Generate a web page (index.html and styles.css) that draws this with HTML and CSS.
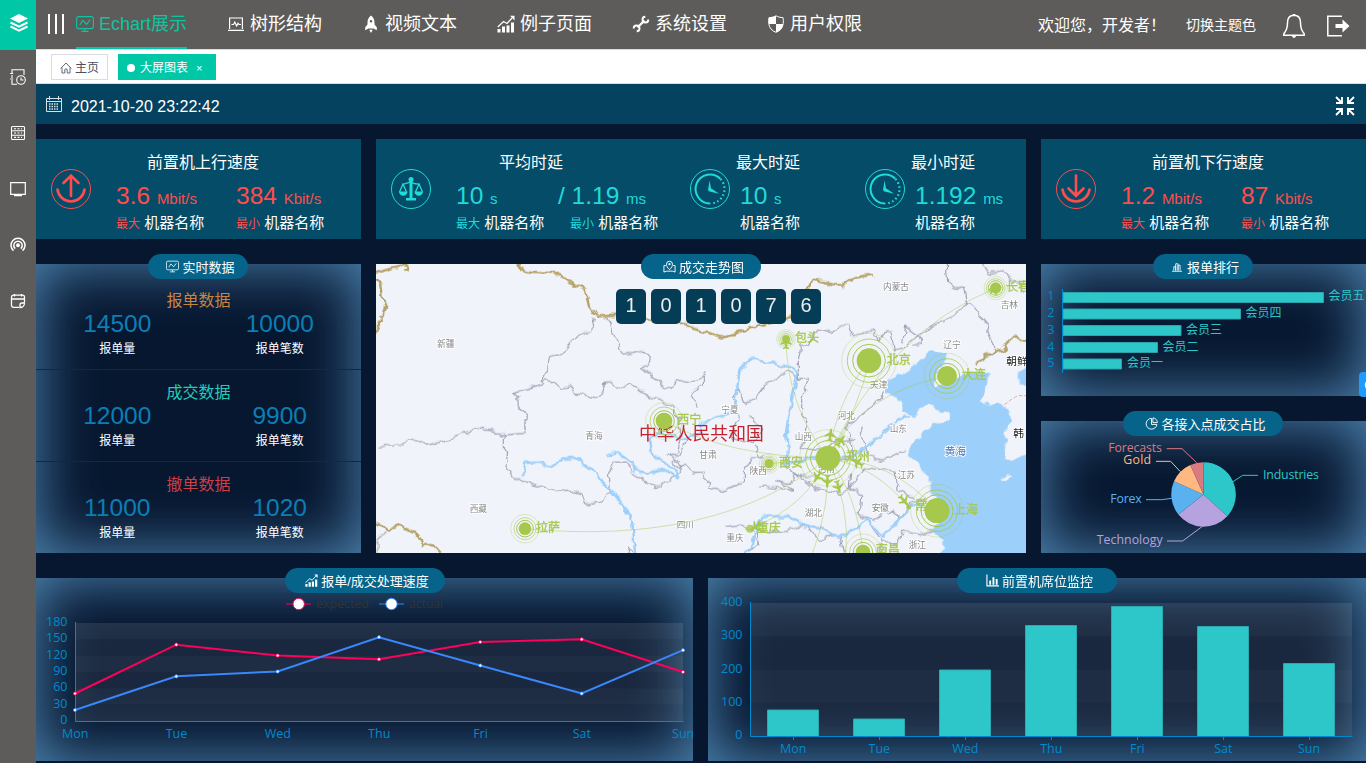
FILE: index.html
```html
<!DOCTYPE html>
<html lang="zh-CN">
<head>
<meta charset="utf-8">
<title>大屏图表</title>
<link rel="stylesheet" href="styles.css">
</head>
<body>
<svg class="defs" width="0" height="0">
  <symbol id="i-monitor" viewBox="0 0 18 18"><g fill="none" stroke="currentColor" stroke-width="1.1"><rect x=".6" y="1.6" width="16.8" height="12" rx="2"/><path d="M3.8 10l3-4.6 3.8 4 3.6-4.8M9 13.6V16M5.5 16.4h7"/></g></symbol>
  <symbol id="i-laptop" viewBox="0 0 18 18"><g fill="none" stroke="currentColor" stroke-width="1.2"><path d="M2.6 14V3h12.800v11M1 15.400h16M4.500 9.500h2l1.300-2.400L9.600 11l1.400-2.600 1 1.100h2"/></g></symbol>
  <symbol id="i-rocket" viewBox="0 0 18 18"><path fill="currentColor" fill-rule="evenodd" d="M9 .500c2.500 2 3.500 4.200 3.500 7v2l2.300 2.800v3L11.500 13.500h-5L3.200 15.300v-3l2.300-2.800v-2C5.500 4.700 6.500 2.500 9 .500zM9 5a1.300 1.300 0 1 0 0 2.600A1.300 1.300 0 0 0 9 5zM7.200 14.700h3.600L9 18z"/></symbol>
  <symbol id="i-growth" viewBox="0 0 18 18"><path fill="currentColor" d="M.5 14h3v3.500h-3zM5 11.500h3v6H5zM9.500 10.500h3v7h-3zM14 7.500h3v10h-3z"/><path fill="none" stroke="currentColor" stroke-width="1.300" d="M.8 12l5.700-5.500 3.500 2 5-5.500"/><path fill="currentColor" d="M13 .800H17.500V5.500z"/></symbol>
  <symbol id="i-wrench" viewBox="0 0 18 18"><path fill="none" stroke="currentColor" stroke-width="2.300" d="M5.500 12.500l7-7"/><path fill="none" stroke="currentColor" stroke-width="1.900" d="M16.300 4.500a2.900 2.900 0 1 1-3-2.800M1.700 13.500a2.900 2.900 0 1 1 3 2.800"/></symbol>
  <symbol id="i-shield" viewBox="0 0 18 18"><path fill="none" stroke="currentColor" stroke-width="1" d="M9 .8c2 1.300 4.500 1.700 7 1.800.500 2 .400 4 .200 6-.500 4.200-3 7.300-7.200 8.700-4.200-1.400-6.700-4.500-7.200-8.700-.200-2-.300-4 .200-6C4.500 2.500 7 2.100 9 .800z"/><path fill="currentColor" d="M9 .8V9H1.800c-.2-2-.2-4.300.2-6.400C4.500 2.500 7 2.100 9 .8zM9 9h7.200c-.5 4.200-3 7-7.200 8.300z"/></symbol>
  <symbol id="i-clock" viewBox="0 0 40 40"><g fill="none" stroke="currentColor"><circle cx="20" cy="20" r="19.500"/><path stroke-width="2" d="M20 34.500a14.500 14.500 0 1 1 10.300-24.800"/><path stroke-width="2.200" stroke-dasharray="1.600 2.500" d="M30.500 10a14.500 14.500 0 0 1-10 24.500"/></g><path fill="currentColor" d="M19.600 11.500l1.400 7.800 8.200 5.500-9.700-2.400a2 2 0 0 1-1.300-2.600z"/></symbol>
  <symbol id="plane" viewBox="-20 -22 40 44"><path fill="#a6c84c" d="M0-20l3 3 1 10L17 3v4L4 2 3 12l6 5v3l-9-3-9 3v-3l6-5L-4 2l-13 5V3L-4-7l1-10z"/></symbol>
</svg>

<aside class="side">
  <div class="logo"><svg width="20" height="20" viewBox="0 0 20 20"><path fill="#fff" d="M10 1l9 4.500-9 4.500-9-4.500z"/><path fill="none" stroke="#fff" stroke-width="2" d="M1.500 9.500L10 13.700l8.500-4.200M1.500 13.500L10 17.700l8.500-4.200"/></svg></div>
  <div class="side-item"><svg width="16" height="16" viewBox="0 0 16 16"><g fill="none" stroke="currentColor" stroke-width="1.100"><path d="M14 6V.7H2V4M2 6v3M2 11v4.300h5M.2 4.500h3M.2 10h3"/><circle cx="11" cy="11" r="4.300"/><path d="M11 8.500V11h2.500"/></g></svg></div>
  <div class="side-item"><svg width="16" height="16" viewBox="0 0 16 16"><g fill="none" stroke="currentColor" stroke-width="1.100"><rect x="1.500" y="1.500" width="13" height="13" rx="1"/><path d="M1.500 5.800h13M1.500 10.200h13"/><path stroke-dasharray="2 1.500" d="M4 3.700h8M4 8h8M4 12.400h8"/></g></svg></div>
  <div class="side-item"><svg width="16" height="16" viewBox="0 0 16 16"><path fill="none" stroke="currentColor" stroke-width="1.200" d="M.7 1.600h14.600v11.800H.7zM4 14.700h8"/></svg></div>
  <div class="side-item"><svg width="16" height="16" viewBox="0 0 16 16"><g fill="none" stroke="currentColor" stroke-width="1.500"><path d="M3.500 13.600a7 7 0 1 1 9 0M5.200 11.600a4.200 4.200 0 1 1 5.600 0"/><circle cx="8" cy="8.300" r="1.200" fill="currentColor"/></g></svg></div>
  <div class="side-item"><svg width="16" height="16" viewBox="0 0 16 16"><path fill="none" stroke="currentColor" stroke-width="1.300" d="M9 14.300H3.500a2 2 0 0 1-2-2V4.200a2 2 0 0 1 2-2h9a2 2 0 0 1 2 2V9M1.500 6h13M4.500 1v2.500M11.500 1v2.500M10 14.500V12a2 2 0 0 1 2-2h2.500c0 2.500-2 4.500-4.500 4.500z"/></svg></div>
</aside>

<main class="main">
  <header class="header">
    <svg class="burger" width="16" height="20" viewBox="0 0 16 20"><path stroke="#fff" stroke-width="2" d="M1 0v20M8 0v20M15 0v20"/></svg>
    <nav class="nav">
      <a class="nav-item active"><svg><use href="#i-monitor"/></svg>Echart展示</a>
      <a class="nav-item"><svg><use href="#i-laptop"/></svg>树形结构</a>
      <a class="nav-item"><svg><use href="#i-rocket"/></svg>视频文本</a>
      <a class="nav-item"><svg><use href="#i-growth"/></svg>例子页面</a>
      <a class="nav-item"><svg><use href="#i-wrench"/></svg>系统设置</a>
      <a class="nav-item"><svg><use href="#i-shield"/></svg>用户权限</a>
    </nav>
    <div class="user">
      <span class="welcome">欢迎您，开发者！</span>
      <span class="theme">切换主题色</span>
      <svg class="bell" width="24" height="26" viewBox="0 0 24 26"><path fill="none" stroke="#fff" stroke-width="1.500" d="M12 2.200c-4.500 0-6.500 3.500-6.500 7.500 0 6-1.300 8.300-3.700 11v1.500h20.400v-1.500c-2.400-2.700-3.700-5-3.700-11 0-4-2-7.500-6.500-7.500z"/><path fill="#fff" d="M10.500 1h3v1.500h-3zM10 22.500h4c0 1.500-1 2.500-2 2.500s-2-1-2-2.500z"/></svg>
      <svg width="24" height="24" viewBox="0 0 24 24"><path fill="none" stroke="#fff" stroke-width="1.500" d="M16 2.200H1.800v19.600H16"/><path fill="#fff" d="M9.500 10h7V5.500l7 6.500-7 6.500V14h-7z"/></svg>
    </div>
  </header>

  <div class="tabs">
    <span class="tab"><svg width="12" height="12" viewBox="0 0 12 12"><path fill="none" stroke="#606a78" d="M.6 6.500L6 1l5.400 5.500M2 5.500V11h2.800V8a1.200 1.200 0 0 1 2.400 0v3H10V5.500"/></svg>主页</span>
    <span class="tab on"><i class="dot"></i>大屏图表<b class="close">×</b></span>
  </div>

  <div class="clockbar">
    <svg width="16" height="16" viewBox="0 0 16 16"><path fill="none" stroke="#d5e2e8" d="M.5 2.500h15v13H.5zM.5 5.500h15M3.500 0v4M12.500 0v4"/><path stroke="#d5e2e8" stroke-width="1.300" stroke-dasharray="1.500 1" d="M3 8h10M3 10.500h10M3 13h10"/></svg>
    <span>2021-10-20 23:22:42</span>
    <svg class="shrink" width="20" height="20" viewBox="0 0 20 20"><path fill="none" stroke="#fff" stroke-width="1.900" d="M1 1l5.500 5.500M7 1v6H1M19 1l-5.500 5.500M13 1v6h6M1 19l5.500-5.500M7 19v-6H1M19 19l-5.500-5.500M13 19v-6h6"/></svg>
  </div>

  <section class="board">
    <div class="cards">
      <div class="card red">
        <svg class="ring" viewBox="0 0 40 40"><g fill="none" stroke="currentColor"><circle cx="20" cy="20" r="19.500"/><path stroke-width="2.600" stroke-linecap="round" d="M20 27V7M12.500 14L20 6.500l7.500 7.500M6.500 20.500a13.600 13.600 0 0 0 27 0"/></g></svg>
        <div class="metric wide">
          <h3>前置机上行速度</h3>
          <div class="pair"><div><p class="val">3.6 <small>Mbit/s</small></p><p class="name"><em>最大</em> 机器名称</p></div><div><p class="val">384 <small>Kbit/s</small></p><p class="name"><em>最小</em> 机器名称</p></div></div>
        </div>
      </div>
      <div class="card teal">
        <div class="seg first">
          <svg class="ring" viewBox="0 0 40 40"><circle cx="20" cy="20" r="19.500" fill="none" stroke="currentColor"/><path fill="currentColor" d="M18.500 12h3v17h3.500v2.500H15V29h3.500z"/><circle cx="20" cy="10.500" r="2.500" fill="currentColor"/><path fill="none" stroke="currentColor" stroke-width="1.300" d="M11 15c4 .5 6-2.500 9-1.500s5 2 9 1.500M12 15l-3.500 8M12 15l3.500 8M28 15l-3.500 8M28 15l3.500 8"/><path fill="currentColor" d="M8 22.500h8.500a4.200 4.200 0 0 1-8.500 0zM23.500 22.500H32a4.200 4.200 0 0 1-8.500 0z"/></svg>
          <div class="metric avg">
            <h3>平均时延</h3>
            <div class="pair"><div><p class="val">10 <small>s</small></p><p class="name"><em>最大</em> 机器名称</p></div><div><p class="val slash">/ 1.19 <small>ms</small></p><p class="name"><em>最小</em> 机器名称</p></div></div>
          </div>
        </div>
        <div class="seg">
          <svg class="ring"><use href="#i-clock"/></svg>
          <div class="metric solo"><h3>最大时延</h3><p class="val">10 <small>s</small></p><p class="name">机器名称</p></div>
        </div>
        <div class="seg">
          <svg class="ring"><use href="#i-clock"/></svg>
          <div class="metric solo"><h3>最小时延</h3><p class="val">1.192 <small>ms</small></p><p class="name">机器名称</p></div>
        </div>
      </div>
      <div class="card red">
        <svg class="ring" viewBox="0 0 40 40"><g fill="none" stroke="currentColor"><circle cx="20" cy="20" r="19.500"/><path stroke-width="2.600" stroke-linecap="round" d="M20 6.500V27M12.500 19.500L20 27l7.500-7.500M6.500 20.500a13.600 13.600 0 0 0 27 0"/></g></svg>
        <div class="metric wide">
          <h3>前置机下行速度</h3>
          <div class="pair"><div><p class="val">1.2 <small>Mbit/s</small></p><p class="name"><em>最大</em> 机器名称</p></div><div><p class="val">87 <small>Kbit/s</small></p><p class="name"><em>最小</em> 机器名称</p></div></div>
        </div>
      </div>
    </div>

    <div class="middle">
      <div class="panel stats">
        <div class="pill w100"><svg><use href="#i-monitor"/></svg>实时数据</div>
        <div class="stat"><h4 class="orange">报单数据</h4><div class="cols"><div><b>14500</b><span>报单量</span></div><div><b>10000</b><span>报单笔数</span></div></div></div>
        <div class="stat"><h4 class="aqua">成交数据</h4><div class="cols"><div><b>12000</b><span>报单量</span></div><div><b>9900</b><span>报单笔数</span></div></div></div>
        <div class="stat"><h4 class="crimson">撤单数据</h4><div class="cols"><div><b>11000</b><span>报单量</span></div><div><b>1020</b><span>报单笔数</span></div></div></div>
      </div>

      <div class="map">
        <svg class="map-svg" width="650" height="289" viewBox="0 12 1950 867">
          <defs><filter id="rough" filterUnits="userSpaceOnUse" x="-60" y="-60" width="2070" height="1000" color-interpolation-filters="sRGB"><feTurbulence type="fractalNoise" baseFrequency=".035" numOctaves="2" seed="4"/><feDisplacementMap in="SourceGraphic" scale="24" xChannelSelector="R" yChannelSelector="G"/></filter></defs>
          <rect y="12" width="1950" height="867" fill="#f0f3fa"/>
          <g filter="url(#rough)">
            <g transform="translate(972 0)" fill="#9ccffa">
              <path d="M560 372L595 345 635 325 660 300 680 280 700 275 735 278 742 300 715 330 705 350 700 385 720 378 750 370 790 345 820 330 868 340 863 375 845 418 870 440 892 430 925 445 930 485 913 515 918 545 912 595 935 603 1010 565V920H710L735 840 690 810 722 785 715 720 690 695 685 650 655 610 620 580 650 540 690 500 720 485 755 475 752 455 720 458 700 440 690 435 660 445 640 468 612 458 608 430 598 422 560 395zM1010 320H978L955 335 952 368 978 382h32z"/>
              <path fill="#f0f3fa" d="M904 658l22-10 10 6-24 11z"/>
            </g>
            <g fill="none" stroke="#a1a3b4" stroke-width="3.500" stroke-linejoin="round">
              <path d="M655 175l-5 35-35 15-30 22-30 35-35 8-5 35-17 35 10 10-95 30 12 10 2 30 33 33-20 22 5 25-65 5-55-20-65 13-40 20-60 17-45-16-50 18-60 4M692 172l15 35 10 25 25 50 30-2 30-8 18 15-5 25-22 13 22 10 20 15 12 15 20 15 15 5 22-25 40 5 45-17M500 360l28 0 28 25 25-5 15 22 30 3 30 7 25-14 5-32 50 20 26-14 20 15 35 23 35 10 40 20 20 40M385 520l0 45 10 15-5 40 20 30 30 12 30 16 38 7 35 10 35-5 40 12 10 30 45-6 15-12 15-15-2-35 0-25 15-30 35 0 25 35 22 8 10 20 25 10 25-2 15-20 30-12 15-25-10-20-35-20 40 5 20-55 25-10M890 600l20 25 20-10 25 25h35M975 375l-28 30 20 40M755 890l5-29 15 29M905 580l10-60-20-70"/>
              <g transform="translate(972 0)">
                <path d="M738 0l5 67 30 20 20-5 10 50-50 40-45 20-50 30-50 45-25 5-10-60-20 0-15 30-20-30-60 15-15-30-25 0-20 20-40-10-20 20-10 35-25-8-8 50 0 50 30 5-20 55 0 45 20 15-10 70-15 15 60 15 50-10 10 35 40-5-10-70-15-20 90-70 30-40M830 0l40 37 40-5 25 30 20 0 15 40M800 130l25 15 15 20 25 30-5 20 25 50-10 15M610 250l10-50 35 25 10 25-25 10M100 415l15-30 20 45 35-15 25-40 65-40 30 15M10 340v40M100 415l15 60-20 60 60 15 30-40-40-45M0 640l25 25 0 20 40 5 65-20 0-30 25-50 30 0-20-30M225 665l50 5 10-20 60 0M480 500l25 90 40 10 30-10 40-20M270 590l-10 30 35 35M285 640l60 45 80 18 40-40 30-40 90 10 10 60 45 25M455 640l-5 45 35 20-5 65 40 10 60-30 20 25 30-45 50-20M70 800l45-5 40 20 20 35-30 28M180 860l-10-50 80 5 70-20 40 45 60-20 10 59M515 800l30 40 45 10 20-35 60 10 30-10M540 879l0-30M180 680l100 10-50-30M360 600l30-50 70-10"/>
              </g>
            </g>
            <g fill="none" stroke="#b5a266" stroke-width="7" stroke-linejoin="round">
              <path d="M-20 43l50-13 35-10 15-8 20 2v10l-15 8M-10 50l20 25 5 45 15 20-8 22-12 8 2 25-20 20M425 0l10 30 25 8 35 2 55 2 45 35 35 12 12 50 22 30 55-2 60 10 50 2 60-8 25 20 40 14 65 20 30 6 40-15 60-20 60-10 70-30 20-35-5-30 15-32 40 6 50 15 35-25 20-5 40-6M-20 780l60 30 25-15 55 25 20 35 30 0 30 34M1800 315l25-30 55-15 20-30 15-12 20 15 45-2"/>
            </g>
            <g fill="none" stroke="#9ccffa" stroke-width="7" stroke-linejoin="round" stroke-linecap="round">
              <path d="M442 648l6-40 40 0 35 12 40-20 30-10 60 45 50 55 35 40 30 55 5 40 5 74M700 585l20-12 20 15 25 20 15 25 40 5 40-10 30 15 15 10M910 650l-10-20-75-50-5-40 30-25 60 20 70-15-10-30 90-30 20-40 10-90 35-35 60 15 55 10 25 15-10 55-15 65-10 60 5 60 -10 40 80-20 110-5 30-10 50-40 40-30 30-30 30-10"/>
              <path d="M1085 900l40-36 15-60 20-35 80 0 40 25 60 10 30 20 40 0 60-45 50 50 60-60 20-30 40-10"/>
            </g>
            <path d="M25 815l-20 20 0 60" fill="none" stroke="#c5c2c0" stroke-width="7"/>
          </g>
          <path d="M1885 434l20-15 20-12h25" fill="none" stroke="#e8a8bd" stroke-width="3" stroke-dasharray="12 5"/>
          <g class="place">
            <text x="183" y="262">新疆</text><text x="628" y="538">青海</text><text x="281" y="757">西藏</text><text x="902" y="805">四川</text>
            <text x="1521" y="90">内蒙古</text><text x="1874" y="145">吉林</text><text x="1702" y="263">辽宁</text><text x="1036" y="458">宁夏</text><text x="1385" y="478">河北</text><text x="1541" y="517">山东</text><text x="1256" y="539">山西</text><text x="970" y="595">甘肃</text><text x="1121" y="641">陕西</text><text x="1565" y="653">江苏</text><text x="1487" y="753">安徽</text><text x="1286" y="769">湖北</text><text x="1051" y="844">重庆</text><text x="1598" y="865">浙江</text><text x="1482" y="385">天津</text><text x="1325" y="637">河南</text>
          </g>
          <g class="abroad"><text x="1891" y="315">朝鲜</text><text x="1912" y="532">韩</text></g>
          <text class="sea" x="1706" y="584">黄海</text>
          <text class="country" x="789" y="541">中华人民共和国</text>
          <g transform="translate(972 0)">
            <g class="fly">
              <path d="M-108 483Q80 590 384 594M-525 806Q50 860 384 594M258 240Q262 440 384 594M507 302Q410 420 384 594M507 302Q480 440 384 594M887 84Q560 220 384 594M741 348Q480 400 384 594M207 611L384 594M710 752Q580 600 384 594M625 742Q530 620 384 594M150 806Q320 740 384 594M489 876Q470 700 384 594M384 594Q390 740 338 879M384 594Q450 740 438 879"/>
            </g>
            <g class="halo">
              <circle cx="507" cy="302" r="49"/><circle cx="507" cy="302" r="65" opacity=".8"/><circle cx="507" cy="302" r="82" opacity=".3"/>
              <circle cx="384" cy="594" r="52"/><circle cx="384" cy="594" r="67" opacity=".8"/><circle cx="384" cy="594" r="85" opacity=".3"/>
              <circle cx="711" cy="752" r="48"/><circle cx="711" cy="752" r="62" opacity=".8"/><circle cx="711" cy="752" r="79" opacity=".3"/>
              <circle cx="741" cy="348" r="38"/><circle cx="741" cy="348" r="52" opacity=".8"/><circle cx="741" cy="348" r="68" opacity=".3"/>
              <circle cx="-108" cy="483" r="31"/><circle cx="-108" cy="483" r="42" opacity=".7"/><circle cx="-108" cy="483" r="55" opacity=".3"/>
              <circle cx="-525" cy="806" r="25"/><circle cx="-525" cy="806" r="33" opacity=".6"/><circle cx="-525" cy="806" r="43" opacity=".3"/>
              <circle cx="887" cy="84" r="22"/><circle cx="887" cy="84" r="28" opacity=".6"/><circle cx="887" cy="84" r="35" opacity=".3"/>
              <circle cx="489" cy="876" r="29"/><circle cx="489" cy="876" r="40" opacity=".6"/><circle cx="489" cy="876" r="54" opacity=".3"/>
              <circle cx="207" cy="611" r="18" opacity=".7"/><circle cx="207" cy="611" r="23" opacity=".5"/><circle cx="207" cy="611" r="29" opacity=".3"/>
              <circle cx="258" cy="237" r="16" opacity=".7"/><circle cx="258" cy="237" r="22" opacity=".5"/><circle cx="258" cy="237" r="28" opacity=".3"/>
            </g>
            <g fill="#a6c84c">
              <circle cx="507" cy="302" r="37"/><circle cx="384" cy="594" r="37"/><circle cx="711" cy="752" r="37"/><circle cx="741" cy="348" r="30"/><circle cx="-108" cy="483" r="25"/><circle cx="-525" cy="806" r="19"/><circle cx="887" cy="84" r="17"/><circle cx="489" cy="876" r="22"/><circle cx="207" cy="611" r="14"/><circle cx="258" cy="237" r="12"/><circle cx="150" cy="806" r="12" opacity=".8"/><circle cx="626" cy="742" r="7"/>
            </g>
            <use href="#plane" x="-20" y="-22" width="40" height="44" transform="translate(258 248)"/>
            <use href="#plane" x="-20" y="-22" width="40" height="44" transform="translate(887 88) rotate(70)"/>
            <use href="#plane" x="-20" y="-22" width="40" height="44" transform="translate(391 525) rotate(8)"/>
            <use href="#plane" x="-20" y="-22" width="40" height="44" transform="translate(422 543) rotate(35)"/>
            <use href="#plane" x="-20" y="-22" width="40" height="44" transform="translate(473 608) rotate(-60)"/>
            <use href="#plane" x="-20" y="-22" width="40" height="44" transform="translate(353 650) rotate(215)"/>
            <use href="#plane" x="-20" y="-22" width="40" height="44" transform="translate(382 664) rotate(182)"/>
            <use href="#plane" x="-20" y="-22" width="40" height="44" transform="translate(415 680) rotate(165)"/>
            <use href="#plane" x="-20" y="-22" width="40" height="44" transform="translate(612 722) rotate(140)"/>
            <use href="#plane" x="-20" y="-22" width="40" height="44" transform="translate(168 800) rotate(235)"/>
            <g class="city">
              <text x="285" y="246">包头</text><text x="560" y="312">北京</text><text x="786" y="358">大连</text><text x="918" y="94">长春</text><text x="437" y="604">郑州</text><text x="237" y="621">西安</text><text x="646" y="750">常州</text><text x="762" y="763">上海</text><text x="170" y="816">重庆</text><text x="527" y="881">南昌</text><text x="-68" y="492">西宁</text><text x="-492" y="816">拉萨</text>
            </g>
            <circle cx="711" cy="752" r="37" fill="#a6c84c"/>
          </g>
        </svg>
        <div class="pill w120"><svg viewBox="0 0 14 14"><path fill="none" stroke="currentColor" d="M3 6H1v7l3-1h6l3 1V6h-2M7 10.500C4.500 8 3.800 6.500 3.800 4.500a3.200 3.200 0 0 1 6.400 0c0 2-.7 3.500-3.200 6z"/><circle cx="7" cy="4.500" r="1.200" fill="currentColor"/></svg>成交走势图</div>
        <div class="digits"><span>1</span><span>0</span><span>1</span><span>0</span><span>7</span><span>6</span></div>
      </div>

      <div class="right">
        <div class="panel half">
          <div class="pill w100"><svg class="small" viewBox="0 0 14 14"><path fill="none" stroke="currentColor" stroke-width="1.200" d="M0 13h14M2.500 12V6.500h2.700V12M5.200 12V2.500h3.200V12M8.400 12V4.500h2.900V12"/></svg>报单排行</div>
          <svg class="chart" width="325" height="132" viewBox="1041 264 325 132">
            <g fill="#2ec7c9" stroke="#2aa3ad"><path d="M1063 292.500h260.500v10H1063zM1063 309h177.500v10H1063zM1063 325.500h118v10H1063zM1063 342.500h94.500v10H1063zM1063 359h58.500v10H1063z"/></g>
            <path stroke="#008acd" d="M1062.500 289v84"/>
            <g class="axis" text-anchor="end"><text x="1054.500" y="300">1</text><text x="1054.500" y="317">2</text><text x="1054.500" y="334">3</text><text x="1054.500" y="351">4</text><text x="1054.500" y="367">5</text></g>
            <g class="bar-name"><text x="1328.500" y="300">会员五</text><text x="1245.500" y="317">会员四</text><text x="1186" y="334">会员三</text><text x="1162.500" y="351">会员二</text><text x="1127" y="367">会员一</text></g>
          </svg>
        </div>
        <div class="panel half">
          <div class="pill w160"><svg viewBox="0 0 14 14"><path fill="none" stroke="currentColor" d="M7 1.500a5.800 5.800 0 1 0 5.800 6.500H7zM8.500 1v5H13.300A5 5 0 0 0 8.500 1z"/></svg>各接入点成交占比</div>
          <svg class="chart" width="325" height="132" viewBox="33 63 975 396">
            <path fill="#2ec7c9" d="M520.500 283.500V186.500A97 97 0 0 1 592 349z"/>
            <path fill="#b6a2de" d="M520.500 283.500L592 349A97 97 0 0 1 445 343.500z"/>
            <path fill="#5ab1ef" d="M520.500 283.500L445 343.500A97 97 0 0 1 432 244z"/>
            <path fill="#ffb980" d="M520.500 283.500L432 244A97 97 0 0 1 481 195z"/>
            <path fill="#d87a80" d="M520.500 283.500L481 195A97 97 0 0 1 520.500 186.500z"/>
            <g fill="none" stroke-width="3"><path stroke="#2ec7c9" d="M609 245l29-19h46"/><path stroke="#b6a2de" d="M516 380l-58 43h-47"/><path stroke="#5ab1ef" d="M425 295l-30 4h-47"/><path stroke="#ffb980" d="M451 215l-29-31h-44"/><path stroke="#d87a80" d="M500 188l-44-42h-46"/></g>
            <g class="pie-name"><text x="699" y="237" fill="#2ec7c9" textLength="168">Industries</text><text x="200" y="433" fill="#b6a2de" textLength="198">Technology</text><text x="241" y="310" fill="#5ab1ef" textLength="94">Forex</text><text x="280" y="193" fill="#ffb980" textLength="83">Gold</text><text x="235" y="157" fill="#d87a80" textLength="161">Forecasts</text></g>
          </svg>
        </div>
      </div>
    </div>

    <div class="bottom">
      <div class="panel">
        <div class="pill w160"><svg><use href="#i-growth"/></svg>报单/成交处理速度</div>
        <svg class="chart" width="657" height="183" viewBox="36 578 657 183">
          <g fill="#fafafa" fill-opacity=".1"><path d="M75 623h608v16.300H75zM75 655.700h608V672H75zM75 688.300h608v16.300H75z"/></g>
          <g fill="#c8c8c8" fill-opacity=".1"><path d="M75 639.300h608v16.400H75zM75 672h608v16.300H75zM75 704.600h608V721H75z"/></g>
          <path fill="none" stroke="#008acd" d="M75.500 622v99.500H683.500"/>
          <g fill="none" stroke-width="2"><path stroke="#ff005a" d="M75 693.500L176.300 644.700 277.700 655.500 379 659.300 480.300 642 581.700 639.300 683 672"/><path stroke="#3888fa" d="M75 710L176.300 676.300 277.700 671.500 379 637.200 480.300 665.500 581.700 693.500 683 650.200"/></g>
          <g fill="#fff" stroke="#ff005a" stroke-width=".8"><circle cx="75" cy="693.500" r="1.600"/><circle cx="176.300" cy="644.700" r="1.600"/><circle cx="277.700" cy="655.500" r="1.600"/><circle cx="379" cy="659.300" r="1.600"/><circle cx="480.300" cy="642" r="1.600"/><circle cx="581.700" cy="639.300" r="1.600"/><circle cx="683" cy="672" r="1.600"/></g>
          <g fill="#fff" stroke="#3888fa" stroke-width=".8"><circle cx="75" cy="710" r="1.600"/><circle cx="176.300" cy="676.300" r="1.600"/><circle cx="277.700" cy="671.500" r="1.600"/><circle cx="379" cy="637.200" r="1.600"/><circle cx="480.300" cy="665.500" r="1.600"/><circle cx="581.700" cy="693.500" r="1.600"/><circle cx="683" cy="650.200" r="1.600"/></g>
          <path stroke="#b8085a" stroke-width="1.500" d="M286 604h25"/><circle cx="298.700" cy="604" r="5.700" fill="#fff" stroke="#ff005a"/>
          <path stroke="#2d67b8" stroke-width="1.500" d="M379 604h25"/><circle cx="391.500" cy="604" r="5.700" fill="#fff" stroke="#3888fa"/>
          <g class="legend"><text x="316" y="607.500" textLength="53">expected</text><text x="409" y="607.500" textLength="34">actual</text></g>
          <g class="axis" text-anchor="end"><text x="67.500" y="626">180</text><text x="67.500" y="642">150</text><text x="67.500" y="659">120</text><text x="67.500" y="675">90</text><text x="67.500" y="691">60</text><text x="67.500" y="708">30</text><text x="67.500" y="724">0</text></g>
          <g class="axis" text-anchor="middle"><text x="75.300" y="738">Mon</text><text x="176.500" y="738">Tue</text><text x="277.900" y="738">Wed</text><text x="379.200" y="738">Thu</text><text x="480.500" y="738">Fri</text><text x="581.900" y="738">Sat</text><text x="683.200" y="738">Sun</text></g>
        </svg>
      </div>
      <div class="panel">
        <div class="pill w160"><svg viewBox="0 0 14 14"><path fill="none" stroke="currentColor" stroke-width="1.200" d="M1 .5v12.300h13"/><path fill="currentColor" d="M3.500 7h2v4.500h-2zM7 3.500h2v8H7zM10.500 5.500h2v6h-2z"/></svg>前置机席位监控</div>
        <svg class="chart" width="658" height="183" viewBox="708 578 658 183">
          <g fill="#fafafa" fill-opacity=".1"><path d="M750 603h602v33.300H750zM750 669.500h602v33.300H750z"/></g>
          <g fill="#c8c8c8" fill-opacity=".1"><path d="M750 636.300h602v33.200H750zM750 702.800h602V736H750z"/></g>
          <path fill="none" stroke="#008acd" d="M750.500 602v134.500H1352.500M793.500 736v4M879.500 736v4M965.500 736v4M1051.500 736v4M1137.500 736v4M1223.500 736v4M1309.500 736v4"/>
          <path fill="#2ec7c9" stroke="#2aa9b0" d="M767.500 736v-26h51v26M853.500 736v-17h51v17M939.500 736v-66h51v66M1025.500 736V625.500h51V736M1111.500 736V606.500h51V736M1197.500 736V626.500h51V736M1283.500 736V663.500h51V736"/>
          <g class="axis" text-anchor="end"><text x="742.500" y="606">400</text><text x="742.500" y="639">300</text><text x="742.500" y="673">200</text><text x="742.500" y="706">100</text><text x="742.500" y="739">0</text></g>
          <g class="axis" text-anchor="middle"><text x="793.300" y="753">Mon</text><text x="879.300" y="753">Tue</text><text x="965.300" y="753">Wed</text><text x="1051.300" y="753">Thu</text><text x="1137.300" y="753">Fri</text><text x="1223.300" y="753">Sat</text><text x="1309" y="753">Sun</text></g>
        </svg>
      </div>
    </div>
  </section>
</main>
<div class="drawer"><svg width="7" height="25" viewBox="0 0 7 25"><path fill="none" stroke="#fff" stroke-width="1.500" d="M8 9.500c-2 2-2 5 0 7"/></svg></div>
</body>
</html>
```

FILE: styles.css
```css
* { box-sizing: border-box; margin: 0; padding: 0; }
html, body { height: 763px; overflow: hidden; }
body { display: flex; background: #071730; color: #fff; font-family: "Liberation Sans", "Noto Sans CJK SC", sans-serif; }
.defs { position: absolute; }
svg { display: block; flex: none; }

.side { width: 36px; height: 763px; background: #5e5c5a; flex: none; }
.logo { height: 50px; background: #00c8a7; display: flex; justify-content: center; align-items: center; padding: 0 0 4px 2px; margin-bottom: -1px; }
.side-item { height: 56px; display: flex; align-items: center; justify-content: center; }

.main { flex: 1; min-width: 0; }
.header { height: 49px; background: #5e5c5a; display: flex; align-items: flex-start; padding-left: 12px; }
.burger { margin-top: 14px; }
.nav { display: flex; gap: 40px; margin-left: 12px; }
.nav-item { height: 49px; display: flex; align-items: center; gap: 5px; font-size: 18px; line-height: 46px; padding-top: 1px; border-bottom: 2px solid transparent; white-space: nowrap; }
.nav-item svg { width: 18px; height: 18px; }
.nav-item.active { color: #12c2a0; border-color: #00c8a7; }
.user { display: flex; align-items: center; height: 49px; margin-left: auto; padding-right: 16px; white-space: nowrap; }
.welcome { font-size: 16px; width: 148px; margin-top: -1px; }
.theme { font-size: 14px; width: 96px; margin-top: -1px; }
.bell { margin-right: 20px; }
.user svg { margin-top: 3px; }

.tabs { height: 35px; background: #fff; border-top: 1px solid #d8dce5; border-bottom: 1px solid #d3dfe6; padding: 4px 15px; display: flex; gap: 10px; }
.tab { height: 26px; width: 57px; border: 1px solid #d8dce5; color: #495060; font-size: 12px; display: flex; align-items: center; padding: 0 0 1px 8px; gap: 3px; }
.tab svg { margin-top: 2px; }
.tab.on { width: 98px; background: #00c8a7; border-color: #00c8a7; color: #fff; gap: 0; }
.dot { width: 8px; height: 8px; border-radius: 50%; background: #fff; margin: 2px 5px 0 0; }
.close { font-size: 11px; font-weight: 400; margin: 2px 0 0 8px; }

.clockbar { height: 40px; background: #05425f; display: flex; align-items: center; padding: 5px 11px 0 10px; font-size: 16px; }
.clockbar svg { margin-top: -5px; }
.clockbar span { margin-left: 9px; }
.clockbar .shrink { margin: -1px 0 0 auto; }

.board { padding-top: 15px; }
.cards { display: grid; grid-template-columns: 325px 650px 325px; gap: 15px; height: 100px; }
.card { background: #044c68; display: flex; }
.red { color: #ff4c4c; }
.teal { color: #20dbd8; }
.ring { width: 40px; height: 40px; margin: 30px 0 0 15px; }
.red .ring { margin-right: 25px; }
.seg { width: 175px; display: flex; }
.seg.first { width: 299px; }
.seg.first .ring { margin-right: 25px; }
.seg .metric.solo { margin-left: 10px; }
.metric { padding-top: 12px; white-space: nowrap; }
.metric h3 { color: #fff; font-size: 16px; font-weight: 400; line-height: 24px; }
.wide h3 { margin-left: 31px; }
.avg h3 { margin-left: 43px; }
.solo h3 { margin-left: -4px; }
.pair { display: grid; grid-template-columns: 120px 120px; }
.avg .pair { grid-template-columns: 114px 114px; }
.val { font-size: 24.500px; line-height: 36px; margin-top: 3px; }
.val small { font-size: 15px; }
.slash { margin-left: -12px; }
.name { color: #fff; font-size: 15px; line-height: 20px; margin-top: -4px; }
.name em { font-size: 12px; font-style: normal; }
.red em { color: #ff4c4c; }
.teal em { color: #20dbd8; }

.middle { display: grid; grid-template-columns: 325px 650px 325px; gap: 15px; margin-top: 25px; height: 289px; }
.panel { position: relative; box-shadow: inset 0 0 60px #538dba; }
.pill { position: absolute; top: -10px; left: 50%; transform: translateX(-50%); height: 25px; border-radius: 13px; background: #06638a; display: flex; align-items: center; justify-content: center; gap: 3px; padding: 0 0 1px 5px; font-size: 13px; white-space: nowrap; }
.pill svg { width: 13px; height: 13px; margin-top: 1px; }
.pill .small { width: 10px; height: 10px; margin-right: 2px; }
.w100 { width: 100px; }
.w120 { width: 120px; }
.w160 { width: 160px; }

.stats { padding-top: 14px; }
.stats .pill, .half .pill { margin-left: -.5px; }
.stat { height: 92px; padding-top: 11px; text-align: center; border-bottom: 1px solid #0a2a55; }
.stat:last-child { border-bottom: 0; height: 91px; }
.stat h4 { font-size: 16px; font-weight: 400; line-height: 24px; }
.orange { color: #c9853f; }
.aqua { color: #22cdb8; }
.crimson { color: #d23c46; }
.cols { display: grid; grid-template-columns: 1fr 1fr; }
.cols b { display: block; color: #0a7fb5; font-size: 24.500px; font-weight: 400; line-height: 26px; margin-top: -2px; }
.cols span { display: block; font-size: 12px; line-height: 20px; margin-top: 2px; }

.map { position: relative; }
.map text { font-family: "Noto Sans CJK SC", sans-serif; }
.place { font-size: 26px; fill: #888; stroke: #fff; stroke-width: 5px; paint-order: stroke; }
.abroad { font-size: 32px; fill: #222; stroke: #fff; stroke-width: 5px; paint-order: stroke; }
.sea { font-size: 32px; fill: #4275bd; stroke: #fff; stroke-width: 5px; paint-order: stroke; }
.country { font-size: 53.500px; fill: #c5222d; }
.city { font-size: 36px; fill: #a6c84c; stroke: #a6c84c; stroke-width: 1px; }
.fly { fill: none; stroke: #a6c84c; stroke-width: 3px; opacity: .45; }
.halo { fill: none; stroke: #a6c84c; stroke-width: 3px; }
.digits { position: absolute; left: 240px; top: 25px; display: flex; gap: 5px; }
.digits span { width: 30px; height: 35px; border-radius: 5px; background: #053d56; color: #eee; font-size: 20px; line-height: 32px; text-align: center; }

.right { display: grid; grid-template-rows: 132px 132px; gap: 25px; }
.axis { font-family: "Open Sans", "Noto Sans", sans-serif; font-size: 12.500px; fill: #008acd; }
.bar-name { font-family: "Noto Sans CJK SC", sans-serif; font-size: 12px; fill: #2ec7c9; }
.pie-name { font-family: "Open Sans", "Noto Sans", sans-serif; font-size: 37px; }
.legend { font-family: "Open Sans", "Noto Sans", sans-serif; font-size: 12.500px; fill: #333; }
.bottom { display: grid; grid-template-columns: 657px 658px; gap: 15px; margin-top: 25px; height: 183px; }
.drawer { position: fixed; right: 0; top: 372px; width: 7px; height: 25px; background: #1f9bff; border-radius: 4px 0 0 4px; overflow: hidden; }
```
